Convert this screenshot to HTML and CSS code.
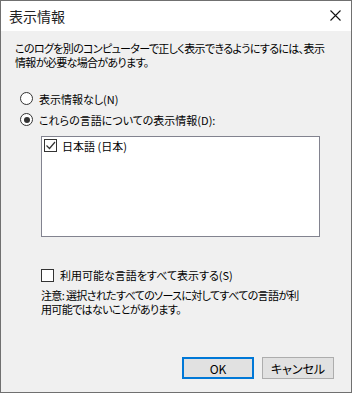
FILE: index.html
```html
<!DOCTYPE html>
<html lang="ja">
<head>
    <meta charset="UTF-8">
    <title>表示情報</title>
    <link rel="stylesheet" href="styles.css">
</head>
<body>
    <div class="window">
        <!-- Title bar -->
        <div class="titlebar">
            <span class="title">表示情報</span>
            <svg class="close" width="11" height="11" viewBox="0 0 11 11">
                <path d="M0.5 0.5 L10.5 10.5 M10.5 0.5 L0.5 10.5" stroke="#111" stroke-width="1.1" fill="none"/>
            </svg>
        </div>

        <div class="content">
            <p class="intro">このログを別のコンピューターで正しく表示できるようにするには、表示<br>情報が必要な場合があります。</p>

            <div class="radio-row">
                <span class="radio"></span>
                <span>表示情報なし(N)</span>
            </div>
            <div class="radio-row">
                <span class="radio checked"></span>
                <span>これらの言語についての表示情報(D):</span>
            </div>

            <!-- Language list -->
            <div class="listbox">
                <div class="list-item">
                    <span class="check checked">
                        <svg width="11" height="11" viewBox="0 0 11 11">
                            <path d="M1.5 5.5 L4.5 8.5 L10 2" stroke="#333" stroke-width="1.2" fill="none"/>
                        </svg>
                    </span>
                    <span>日本語 (日本)</span>
                </div>
            </div>

            <div class="check-row">
                <span class="check"></span>
                <span>利用可能な言語をすべて表示する(S)</span>
            </div>

            <p class="note">注意: 選択されたすべてのソースに対してすべての言語が利<br>用可能ではないことがあります。</p>

            <div class="buttons">
                <button class="btn default">OK</button>
                <button class="btn">キャンセル</button>
            </div>
        </div>
    </div>
</body>
</html>
```

FILE: styles.css
```css
body {
    margin: 0;
    font-family: "Noto Sans CJK JP", "Noto Sans", sans-serif;
    font-size: 11px;
    font-feature-settings: "palt";
    color: #000;
    background: #3a3a3a;
}

.window {
    width: 352px;
    height: 393px;
    box-sizing: border-box;
    border: 1px solid #707070;
    background-color: #f0f0f0;
    display: flex;
    flex-direction: column;
}

.titlebar {
    height: 30px;
    background-color: #fff;
    display: flex;
    align-items: center;
    justify-content: space-between;
    padding: 0 10px 0 8px;
}

.title {
    font-size: 14px;
    color: #222;
    margin-top: -1px;
}

.close {
    margin-top: -1px;
}

.content {
    flex: 1;
    padding: 10px 14px 13px 14px;
    display: flex;
    flex-direction: column;
}

.intro {
    margin: 0 0 21px 0;
    line-height: 14px;
    letter-spacing: -0.65px;
    white-space: nowrap;
}

.radio-row {
    display: flex;
    align-items: center;
    gap: 6px;
    margin-left: 5px;
    height: 17px;
    margin-bottom: 4px;
}

.radio {
    width: 11px;
    height: 11px;
    border: 1px solid #333;
    border-radius: 50%;
    background-color: #fff;
    position: relative;
}

.radio.checked::after {
    content: "";
    position: absolute;
    left: 2.5px;
    top: 2.5px;
    width: 6px;
    height: 6px;
    border-radius: 50%;
    background-color: #333;
}

.listbox {
    margin: 4px 0 0 26px;
    width: 279px;
    height: 101px;
    box-sizing: border-box;
    border: 1px solid #82838f;
    background-color: #fff;
    padding: 1px 2px;
}

.list-item {
    display: flex;
    align-items: center;
    gap: 5px;
    height: 15px;
}

.check {
    width: 11px;
    height: 11px;
    border: 1px solid #333;
    background-color: #fff;
    display: flex;
    align-items: center;
    justify-content: center;
}

.check svg {
    display: block;
}

.check-row {
    display: flex;
    align-items: center;
    gap: 6px;
    margin: 30px 0 0 26px;
}

.note {
    margin: 5px 0 0 26px;
    line-height: 14px;
    letter-spacing: -0.65px;
    white-space: nowrap;
}

.buttons {
    margin-top: auto;
    display: flex;
    justify-content: flex-end;
    gap: 8px;
    padding-right: 3px;
}

.btn {
    width: 72px;
    height: 22px;
    font-family: inherit;
    font-size: 12px;
    font-feature-settings: "palt";
    background-color: #e1e1e1;
    border: 1px solid #adadad;
    padding: 0;
    color: #000;
}

.btn.default {
    border: 2px solid #0078d7;
}
```
